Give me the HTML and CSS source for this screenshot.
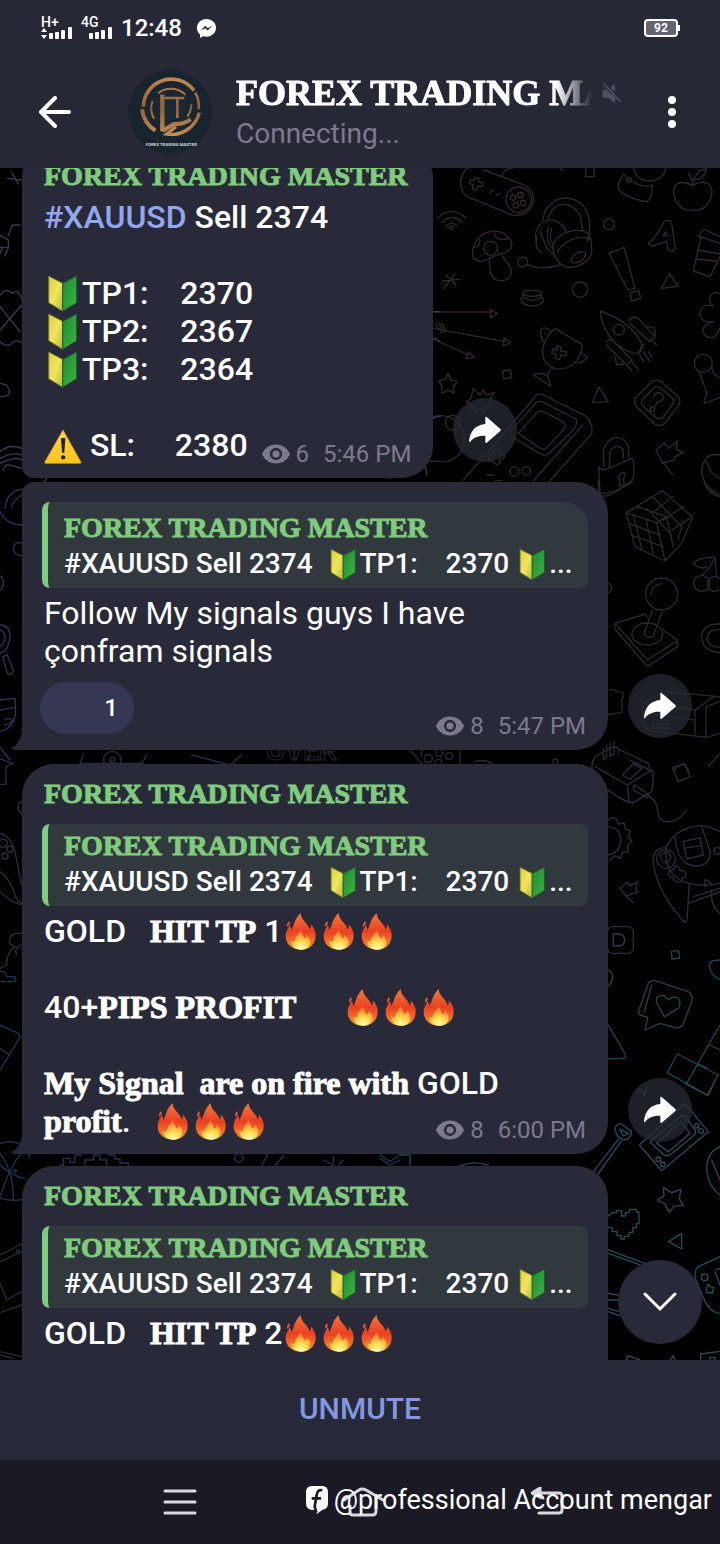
FILE: index.html
```html
<!DOCTYPE html>
<html lang="en">
<head>
    <meta charset="UTF-8">
    <meta name="viewport" content="width=device-width, initial-scale=1.0">
    <title>Forex Trading Master</title>
    <link rel="stylesheet" href="styles.css">
</head>
<body>
    <!-- shared icons -->
    <svg class="defs" width="0" height="0" aria-hidden="true">
        <defs>
            <linearGradient id="leaf-y" x1="0" y1="0" x2="1" y2="1"><stop offset="0" stop-color="#d9cf3a"/><stop offset=".5" stop-color="#f1e65c"/><stop offset="1" stop-color="#b5b93a"/></linearGradient>
            <linearGradient id="leaf-g" x1="0" y1="0" x2="1" y2="1"><stop offset="0" stop-color="#1f8a35"/><stop offset="1" stop-color="#3db53f"/></linearGradient>
            <linearGradient id="flame" x1="0" y1="0" x2="0" y2="1"><stop offset="0" stop-color="#f4793c"/><stop offset=".5" stop-color="#ea4022"/><stop offset="1" stop-color="#f7922c"/></linearGradient>
            <radialGradient id="flame-core" cx=".5" cy=".95" r=".9"><stop offset="0" stop-color="#fffbc0"/><stop offset=".4" stop-color="#ffdf4f"/><stop offset="1" stop-color="#f6702a"/></radialGradient>
            <linearGradient id="warn" x1="0" y1="0" x2="0" y2="1"><stop offset="0" stop-color="#fbd34a"/><stop offset="1" stop-color="#fcc419"/></linearGradient>
        </defs>
        <symbol id="beginner" viewBox="0 0 114 114">
            <path d="M14 6 L56 28 L56 112 L14 86Z" fill="url(#leaf-y)" stroke="#6a7420" stroke-width="3"/>
            <path d="M98 6 L56 28 L56 112 L98 86Z" fill="url(#leaf-g)" stroke="#1d5a2a" stroke-width="3"/>
        </symbol>
        <symbol id="fire" viewBox="0 0 114 114">
            <path d="M57 113 C28 113 10 95 11 70 C12 55 20 48 23 39 C27 45 27 50 27 54 C38 42 35 22 56 3 C56 24 79 34 83 52 C87 48 88 43 86 37 C97 49 102 60 101 73 C100 96 84 113 57 113Z" fill="url(#flame)"/>
            <path d="M21 28 C27 34 21 40 16 45 C13 39 16 33 21 28Z" fill="#e8522d"/>
            <path d="M57 113 C38 113 26 101 28 83 C32 89 35 90 38 88 C38 74 52 66 55 54 C63 64 62 71 68 79 C72 78 74 74 74 69 C83 77 88 85 85 95 C81 108 70 113 57 113Z" fill="url(#flame-core)"/>
        </symbol>
        <symbol id="warning" viewBox="0 0 114 114">
            <path d="M57 12 L111 109 Q112 112 108 112 L5 112 Q1 112 2 109Z" fill="url(#warn)" stroke="#e0a41a" stroke-width="2"/>
            <path d="M51 36h13l-3 44h-7Z" fill="#222"/>
            <circle cx="57.500" cy="94" r="6.500" fill="#222"/>
        </symbol>
        <symbol id="eye" viewBox="0 0 86 58">
            <path fill-rule="evenodd" d="M43 0C22 0 7 12 0 29c7 17 22 29 43 29s36-12 43-29C79 12 64 0 43 0Zm0 48a19 19 0 1 1 0-38 19 19 0 0 1 0 38Z" fill="currentColor"/>
            <circle cx="43" cy="29" r="11" fill="currentColor"/>
        </symbol>
        <symbol id="share" viewBox="0 0 96 82">
            <path d="M49 2 Q50 0 53 2 L94 38 Q97 41 94 44 L53 79 Q50 81 49 78 V58 C27 57 12 64 3 77 Q0 79 0 75 C3 43 20 26 49 23Z" fill="#fff"/>
        </symbol>
    </svg>

    <header class="top">
        <div class="status">
            <span class="signal"><span class="net">H+</span>
                <svg width="32" height="12" viewBox="0 0 32 12" fill="#fff"><path d="M0 5l3-4 3 4zM0 8l3 4 3-4z"/><rect x="8" y="6" width="4" height="6" rx="1"/><rect x="14" y="5" width="4" height="7" rx="1"/><rect x="20" y="3" width="4" height="9" rx="1"/><rect x="27" y="0" width="4" height="12" rx="1"/></svg>
            </span>
            <span class="signal"><span class="net">4G</span>
                <svg width="32" height="12" viewBox="0 0 32 12" fill="#fff"><rect x="8" y="6" width="4" height="6" rx="1"/><rect x="14" y="5" width="4" height="7" rx="1"/><rect x="20" y="3" width="4" height="9" rx="1"/><rect x="27" y="0" width="4" height="12" rx="1"/></svg>
            </span>
            <time class="clock">12:48</time>
            <svg class="messenger" width="19" height="19" viewBox="0 0 56 56"><path d="M28 0C12 0 0 11 0 26c0 8 3 15 9 20v10l9-5c3 1 6 1 10 1 16 0 28-11 28-26S44 0 28 0Z" fill="#fff"/><path d="M11 34l13-14 8 7 13-7-13 14-8-7Z" fill="#272836"/></svg>
            <span class="battery">92</span>
        </div>

        <div class="bar">
            <button class="icon-btn" aria-label="Back">
                <svg width="34" height="32" viewBox="0 0 34 32" fill="none" stroke="#fff" stroke-width="4" stroke-linecap="round" stroke-linejoin="round"><path d="M17 2L3 16l14 14M3 16h28"/></svg>
            </button>
            <svg class="avatar" viewBox="384 212 252 252" role="img" aria-label="Channel photo">
                <defs>
                    <radialGradient id="av"><stop offset="0" stop-color="#1b2a33"/><stop offset="1" stop-color="#17232d"/></radialGradient>
                    <linearGradient id="gold" gradientUnits="userSpaceOnUse" x1="0" y1="236" x2="0" y2="410"><stop offset="0" stop-color="#bd8852"/><stop offset=".5" stop-color="#916038"/><stop offset="1" stop-color="#c58f55"/></linearGradient>
                </defs>
                <circle cx="510" cy="338" r="126" fill="url(#av)"/>
                <g fill="none" stroke="url(#gold)">
                    <path d="M430 322 A84 84 0 0 1 582 274" stroke-width="11"/>
                    <path d="M586 280 A84 84 0 0 1 596 330" stroke-width="8"/>
                    <path d="M598 340 A86 86 0 0 1 500 404 L528 382" stroke-width="10"/>
                    <path d="M426 330 A88 88 0 0 0 466 394" stroke-width="12"/>
                    <path d="M462 358 A62 62 0 0 1 458 305 M474 282 A62 62 0 0 1 556 286" stroke-width="6"/>
                    <path d="M574 315 A64 64 0 0 1 562 352" stroke-width="6"/>
                    <path d="M487 286 V396" stroke-width="13"/>
                    <path d="M487 394 L522 374 Q550 376 572 360" stroke-width="12"/>
                    <path d="M493 296 H553 M532 296 V356" stroke-width="8"/>
                </g>
                <text x="437" y="440" class="avatar-text">FOREX TRADING MASTER</text>
            </svg>
            <div class="title">
                <div class="title-row">
                    <h1>FOREX TRADING MASTER</h1>
                    <svg width="20" height="22" viewBox="0 0 58 64" fill="#4f5060"><path d="M38 4v24L24 17ZM2 22h10l26 24v16L18 46H2Z"/><path d="M4 4l50 54" stroke="#4f5060" stroke-width="5"/></svg>
                </div>
                <p>Connecting...</p>
            </div>
            <button class="icon-btn" aria-label="More options">
                <svg width="8" height="32" viewBox="0 0 8 32" fill="#fff"><circle cx="4" cy="4" r="4"/><circle cx="4" cy="16" r="4"/><circle cx="4" cy="28" r="4"/></svg>
            </button>
        </div>
    </header>

    <main class="chat">
        <!-- wallpaper -->
        <svg class="wallpaper" viewBox="0 168 720 1192" preserveAspectRatio="xMidYMin slice" aria-hidden="true">
            <g transform="translate(420 165) scale(.33333)" stroke="#30262e">
                <path d="M145 8C110 30 115 95 160 102L270 148C310 160 345 130 340 95C335 70 320 60 300 55L190 15M245 35Q250 10 285 8H420l8 8M497 8v27h25V10"/>
                <circle cx="296" cy="104" r="38"/><circle cx="279" cy="98" r="8"/><circle cx="301" cy="90" r="8"/><circle cx="287" cy="121" r="8"/><circle cx="309" cy="114" r="8"/>
                <path d="M163 37l14 4-2 10 14 2-3 12-12-2-5 12-12-4 3-11-12-4 4-12 11 3zM208 84l12-8M228 93l12-8"/>
                <path d="M52 160Q95 118 138 160M65 173Q95 142 128 173M78 184Q95 165 112 184"/><circle cx="94" cy="188" r="5"/>
                <path d="M160 280C145 230 200 180 250 205C285 230 285 255 245 265C215 275 190 290 180 290ZM222 203Q225 228 262 222M162 247Q180 245 180 225M208 285C210 310 208 345 240 347C270 348 280 325 270 305L245 270"/><circle cx="212" cy="250" r="21"/>
                <path d="M368 165C380 90 460 80 495 130C515 165 510 195 502 230M384 170C390 110 450 100 480 150L488 195M350 230C335 190 375 150 410 170Q440 185 436 200M365 262Q342 250 350 215M362 200Q380 265 405 270M385 185Q375 240 402 250M395 190Q385 225 400 235M398 245C410 200 470 185 505 205M398 245C400 280 420 300 440 307C475 310 520 285 515 250Q515 225 505 205M412 262C430 225 475 210 508 222M322 298Q360 318 418 300"/>
                <ellipse cx="475" cy="277" rx="24" ry="13" transform="rotate(-32 475 277)"/><circle cx="308" cy="291" r="15"/><circle cx="567" cy="178" r="16"/><circle cx="480" cy="374" r="23"/>
                <path d="M610 28C590 60 590 75 610 85Q640 105 680 110Q695 105 697 60M612 28Q650 70 697 62M640 8Q650 50 695 48Q735 40 738 8"/><circle cx="627" cy="45" r="7"/>
                <path d="M815 62C780 40 755 60 762 90C770 130 800 140 822 135C850 140 875 110 876 80C875 48 845 45 815 62ZM818 62Q818 40 805 25M820 45Q835 10 860 12Q850 45 820 45"/>
                <path d="M685 235Q715 210 732 170Q750 160 755 175L766 250Q755 265 745 255L740 230L715 237Q695 250 685 235M730 213l5-12 6 10z"/>
                <path d="M568 265L612 247L645 370L623 375ZM630 383l26-6 6 23-27 8zM748 325l26 38-50 8zM900 215L850 192L836 213L900 235M843 218L820 318L870 336L900 275M833 255l67 12M828 282l62 6"/>
                <path d="M67 348l50-5M78 330l30 30M105 328l-35 43M40 441H215M212 433v26l20-13zM40 490L255 530M252 520l20 12-22 10zM45 475l20 28M55 473l18 28M66 475l14 25M40 522L145 570M146 560l16 17-24 4z"/>
                <ellipse cx="337" cy="385" rx="28" ry="9"/><path d="M309 385v12q28 18 56 0v-12M303 398q0 24 34 25q34-2 34-24"/>
                <path d="M405 490L488 540C480 590 450 615 410 612C360 600 350 540 405 490ZM395 500Q370 480 362 495Q362 530 375 530M480 562L503 576Q485 600 465 592M392 612L382 632L392 663L340 630Q360 620 382 632M410 543l14 3-2 12 18 2-3 12-14-2-5 14-13-4 4-12-14-4 4-12 14 3z"/>
                <path d="M541 438C590 455 650 490 665 540Q660 570 635 563C590 550 545 500 541 438ZM628 465Q640 450 655 460L705 515L690 530L630 475M560 530Q570 520 582 530L635 585L620 600L560 540M677 485l25 3 5 25M585 575l5 25 20-3M655 570l18-33M700 530l10 10M670 560l20 30M660 570l10 20M685 560l10 15M635 590l20 25M620 600l15 18"/><circle cx="597" cy="494" r="16"/>
                <path d="M84 625l9 20 18 4-10 16 1 19-17-8-19 8-1-20-9-17 20-4ZM248 618l23-4 4 24-24 4zM537 666l28 44-48 2zM160 670l20 20 10-15 8 15 25-8-15 22 10 12-20 5-3 20-15-10-10 15-5-20-15 5 3-15-15-5 15-12z"/>
                <path d="M645 700L695 650Q710 640 725 652L775 695Q785 710 775 722L735 775Q720 785 705 778L650 725Q640 712 645 700ZM665 705L703 668Q712 662 722 670L758 700Q764 710 758 718L728 758Q718 765 708 758L668 722Q662 714 665 705M700 697Q705 680 722 684Q735 690 728 704Q722 712 710 712L706 725"/><circle cx="697" cy="733" r="7"/>
                <path d="M130 945L350 690Q360 685 370 690L500 755Q520 780 515 805L390 948M270 800L350 712Q360 706 370 712L468 762Q475 775 460 795L385 868Q370 875 358 865L268 810M295 805L352 742Q360 735 370 740L432 772Q440 785 432 792L378 850Q368 855 358 848ZM488 780L340 948"/>
                <circle cx="283" cy="920" r="14"/><circle cx="319" cy="918" r="13"/><path d="M230 850q12 5 10 15q15-5 15 8q-5 12-15 10q0 18-12 15q-10-5-10-12q-15 5-12-10q5-8 15-8q-3-15 9-18M200 930h20M225 947h20M40 755Q100 740 130 800Q145 870 80 890L30 888"/><circle cx="98" cy="773" r="22"/>
                <path d="M552 905L550 855C560 810 615 805 625 845L627 880M568 905L570 860Q590 830 610 855L610 880M536 905Q545 920 560 912L637 880Q645 890 640 940Q600 985 540 985ZM598 930q15-15 17 0l-5 12 3 17-15 3 2-20q-7-3-2-12M708 855L733 833L745 850L772 828L768 853L790 862L765 875L762 885L728 895ZM728 890L758 930"/>
                <circle cx="850" cy="595" r="27"/><path d="M838 620L862 690Q855 690 852 715L900 698M875 605L880 625L900 640M900 385C870 375 860 405 880 425C850 410 830 440 845 460C855 475 870 470 880 470C840 480 840 510 870 518C890 520 900 490 900 490M900 870Q850 860 845 920Q850 970 900 990M860 890Q870 930 900 940"/>
            </g>
            <g transform="translate(400 480) scale(.33333)" stroke="#2b2730">
                <path d="M728 68L788 32L878 112L845 190L795 243L705 200L678 98L710 80ZM678 98L770 128L800 110L710 80M770 128L795 243M800 110L820 200M700 106L725 205M738 118L760 220M685 130L780 165M695 165L788 200M758 50L845 140L835 175M740 85L815 165M762 95L818 50M790 120L850 80M815 150L870 115"/>
                <circle cx="785" cy="342" r="48"/><path d="M752 345Q755 315 785 310M757 390L732 460Q745 480 760 468L787 395M645 430L735 402L742 412M645 430V447L742 560L832 500V480L790 450M645 430L742 540L832 482"/><ellipse cx="742" cy="462" rx="46" ry="33"/>
                <circle cx="905" cy="310" r="24"/><circle cx="945" cy="312" r="22"/><path d="M900 290Q930 270 945 232L950 290M945 232Q900 230 880 250Q900 270 920 260M960 432Q905 430 905 475Q910 515 960 518M960 448Q920 448 922 480Q928 502 960 502M625 310q12 3 10 15-3 12-10 12M630 630q15-5 20 5 15 0 20 5 0 15-5 22 5 15 0 22 5 12-5 15-20 0-28 5-10 0-8-5M912 0Q920 40 960 50M595 0V48Q610 50 630 45L698 5"/>
                <path d="M728 670L790 635L960 650M728 670V720L745 752L920 772L960 760M728 670L885 690V765M885 690L940 650M918 680L960 665M918 680V772M750 700L880 720"/><rect x="758" y="730" width="20" height="14"/><rect x="786" y="732" width="20" height="14"/>
                <path d="M575 855L585 830L640 800L745 850L750 870M610 805V840l10-10V795M630 790V830l12-8V785M640 800q20-2 15 20M820 870l30-20 15 20M925 860l35-40M30 810L70 855M65 830Q60 812 70 808M180 812V850M225 845q30-10 55 8M460 850v-12h12v12"/><circle cx="85" cy="835" r="12"/><circle cx="118" cy="818" r="11"/><circle cx="148" cy="828" r="10"/><circle cx="115" cy="848" r="10"/>
            </g>
            <g transform="translate(580 760) scale(.33333)" stroke="#2b2c3c">
                <path d="M40 0C30 25 35 50 90 95Q140 130 160 128L215 95Q222 70 218 35L150 0M45 20L142 75L215 30M142 75L148 128M128 45L160 10L185 25L150 58ZM165 75l42 30-5 8-38-20q-8-12 1-18M207 108C250 140 220 160 245 180C270 195 305 175 320 150M277 22l38-10 15 38-35 15z"/>
                <path d="M85 180q12-12 25-2l5 14 18-3 2 18 16 6-5 18 10 14-14 12 3 18-18 2-5 18-18-8-15 14M85 200Q125 205 122 245Q118 280 85 285M120 385l22-18 8 10 22-10-5 18 5 12-20 5-12 8zM140 410l20 18"/>
                <path d="M420 215C360 180 290 200 258 262Q215 265 220 310C230 380 270 440 315 488Q325 480 322 465L328 370M258 262Q250 330 300 360Q350 385 420 370M285 230C290 290 310 315 345 318Q385 320 392 280L365 200M310 245l50-12 10 52-50 12ZM312 265l50-8M325 430L420 395M340 410L420 385M395 390Q390 440 420 460M375 358v22l20-8z"/><circle cx="258" cy="297" r="28"/><circle cx="257" cy="292" r="15"/><path d="M285 320q15-5 15 12 18-3 18 10 0 12-12 12-2 15-15 12-12-2-10-14-15 0-15-12 2-12 14-10z"/><circle cx="412" cy="273" r="10"/>
                <rect x="82" y="500" width="78" height="80" rx="16"/>
            </g>
            <g transform="translate(580 760) scale(.33333)" stroke="#234250">
                <path d="M100 522h20q14 5 14 18t-14 18h-20zM274 574l22-2 3 22-23 3zM85 630q15 8 12 25-3 15-12 22M420 600Q385 600 388 620Q395 650 420 658M175 755L205 670Q210 660 225 662L325 695Q340 705 335 725L308 795Q300 806 285 803L240 790L195 810L203 772L180 765ZM193 755L215 675M253 770L230 728Q225 705 248 706Q260 710 265 720Q280 705 295 715Q305 730 295 745ZM85 795L137 885Q138 895 125 896H85M262 938L292 882L415 945L382 1005ZM320 970L420 795M390 855L420 870M355 912L382 925M175 985l20 20M200 982l-10 30M168 998l32-5"/>
            </g>
            <g transform="translate(400 1080) scale(.33333)" stroke="#234c5c">
                <path d="M645 145Q650 130 665 132L695 155Q690 185 665 178Q648 170 645 145ZM660 148l25 12-15 8zM655 178L580 275M665 182L592 285M718 195L855 70L925 155L785 272ZM750 185L840 110Q850 105 858 112L885 150Q890 160 880 168L810 225Q800 230 792 225ZM770 190L842 125L870 160L805 215Z"/><circle cx="890" cy="137" r="7"/><circle cx="903" cy="153" r="7"/><circle cx="775" cy="238" r="7"/><circle cx="788" cy="253" r="7"/>
                <path d="M790 323l25 15 28-10-5 28 12 20-28 3-15 18-12-25-23-12 20-12ZM625 408l12-10h12v-6h16v16h12v-10h12v-10h20v8h8v35h-8v12h-10v14h-12v12h-14v8h-10v-10h-12v-12h-14v-12h-12M845 460v47l-40-22zM625 510L735 550M625 520L720 555M625 640L655 645M625 660h30M625 695l35 12M625 685l40 12M960 530L895 560Q880 575 888 600L915 665Q935 700 960 700M948 570l12-5M945 575l15 40M960 200Q920 215 920 270Q925 320 960 345M935 240l25 60M855 10L920 45Q925 48 928 40L945 0M678 842l5-15 35 12-2 8M810 842l10-15 5 15M902 842v-20l58-8M930 842v-10h15v10M180 258Q220 240 265 256M0 225h30v30"/><circle cx="914" cy="592" r="10"/><path d="M925 612l5 8 12 3-5 8 2 8-10-2-8 2-2-10z"/>
            </g>
            <g transform="translate(0 165) scale(.33333)" stroke="#3d3754">
                <path d="M22 40l45 5M35 22l20 35M60 180H37L25 212M0 212l25 12v24H0M8 245l-8 22M25 248l-10 25M0 390Q20 365 35 385Q55 370 65 400M65 420L0 495M0 425l60 75M0 530q25 20 35 5q10-15 30-2M0 655l20 5 10 20q0 15-30 15M0 860Q30 835 65 850M0 880Q40 860 65 870M0 895q40-20 65-12M10 915q5-20 20-15l35 10M1300 440h20M1300 520q10 0 20 10M1300 760q10-8 20-5M130 960l12-25M1170 940q10-20 30-5M1240 900q40-10 40 30"/>
            </g>
            <g transform="translate(0 470) scale(.33333)" stroke="#332e55">
                <path d="M65 58Q20 65 15 115M65 75Q40 90 35 110M0 125Q20 165 65 165M65 218Q40 215 40 237Q42 255 65 257M0 318q12 5 10 25-2 15-10 18M0 465Q30 465 30 500Q25 545 0 550M0 480Q15 485 15 505Q10 525 0 530M8 560L22 555L40 600Q35 620 22 610ZM0 690L45 685L47 730Q40 775 0 785M0 720L45 712M15 750q15-8 20 0t-20 15M0 832L30 870"/>
            </g>
            <g transform="translate(0 755) scale(.33333)" stroke="#292c43">
                <path d="M0 12L38 25L18 35V88H0M250 0L240 25H425L440 0M575 0L690 30L725 0M65 140Q50 145 55 165L65 178M0 235Q30 240 45 290L65 390M0 350Q30 370 45 420Q52 440 65 445M0 410Q35 445 62 448M65 535Q30 530 28 560Q30 570 45 575Q20 590 20 630L0 640M65 570Q40 580 50 600"/>
                <circle cx="337" cy="15" r="26"/><circle cx="337" cy="15" r="7"/><circle cx="10" cy="265" r="12"/><circle cx="30" cy="282" r="9"/><circle cx="15" cy="303" r="9"/>
            </g>
            <text x="266" y="760" class="over">OVER</text>
            <g transform="translate(0 970) scale(.33333)" stroke="#1e3450">
                <path d="M0 5q15-5 20 15h25q5 5 0 15H0M0 165L55 190Q60 195 58 205L0 300M0 235L28 255M0 520Q60 500 90 560M0 550Q40 600 40 690M65 548Q30 590 0 680M0 585Q40 620 75 625M0 685Q40 695 65 688M180 585h10v-20h20v12h15v-22h20M255 585v-15h25v-15h20v15h20v15M325 555h20v12h15v12h25v8M785 588l18-35M825 588l25-32M970 570l30 15M1000 560v20M1030 570l-15 15M1140 555l30 20 30-20M1140 565l30 20 30-15"/><circle cx="45" cy="602" r="4"/><circle cx="717" cy="564" r="13"/>
            </g>
            <g transform="translate(0 1210) scale(.33333)" stroke="#1c3039">
                <path d="M0 135L65 102M0 155L65 125M0 220L20 270L65 245M0 308L65 285M0 425L65 440M0 435l40 10"/><circle cx="54" cy="124" r="4"/>
            </g>
        </svg>

        <div class="messages">
            <div class="row joined">
                <article class="bubble narrow">
                    <h2 class="sender">FOREX TRADING MASTER</h2>
                    <div class="text strong">
                        <p><a href="#xauusd">#XAUUSD</a> Sell 2374</p>
                        <p>&nbsp;</p>
                        <p><svg class="emoji" role="img" aria-label="beginner"><use href="#beginner"/></svg>TP1:    2370</p>
                        <p><svg class="emoji" role="img" aria-label="beginner"><use href="#beginner"/></svg>TP2:    2367</p>
                        <p><svg class="emoji" role="img" aria-label="beginner"><use href="#beginner"/></svg>TP3:    2364</p>
                        <p>&nbsp;</p>
                    </div>
                    <div class="last">
                        <p class="text strong"><svg class="emoji" role="img" aria-label="warning"><use href="#warning"/></svg> SL:     2380</p>
                        <div class="meta"><svg><use href="#eye"/></svg><span>6</span><time>5:46 PM</time></div>
                    </div>
                </article>
                <button class="share" aria-label="Share"><svg><use href="#share"/></svg></button>
            </div>

            <div class="row spaced">
                <article class="bubble tail reply-only">
                    <blockquote class="quote">
                        <h3>FOREX TRADING MASTER</h3>
                        <p>#XAUUSD Sell 2374  <svg class="emoji" role="img" aria-label="beginner"><use href="#beginner"/></svg>TP1:    2370 <svg class="emoji" role="img" aria-label="beginner"><use href="#beginner"/></svg>...</p>
                    </blockquote>
                    <p class="text">Follow My signals guys I have çonfram signals</p>
                    <div class="last">
                        <button class="reaction" aria-label="1 reaction">1</button>
                        <div class="meta"><svg><use href="#eye"/></svg><span>8</span><time>5:47 PM</time></div>
                    </div>
                    <svg class="tail-shape" viewBox="0 0 12 30"><path d="M12 0Q12 24 0 28Q1 30 4 30H12Z"/></svg>
                </article>
                <button class="share" aria-label="Share"><svg><use href="#share"/></svg></button>
            </div>

            <div class="row">
                <article class="bubble tail">
                    <h2 class="sender">FOREX TRADING MASTER</h2>
                    <blockquote class="quote">
                        <h3>FOREX TRADING MASTER</h3>
                        <p>#XAUUSD Sell 2374  <svg class="emoji" role="img" aria-label="beginner"><use href="#beginner"/></svg>TP1:    2370 <svg class="emoji" role="img" aria-label="beginner"><use href="#beginner"/></svg>...</p>
                    </blockquote>
                    <div class="text strong">
                        <p>GOLD   <b>HIT TP</b> 1<svg class="emoji" role="img" aria-label="fire"><use href="#fire"/></svg><svg class="emoji" role="img" aria-label="fire"><use href="#fire"/></svg><svg class="emoji" role="img" aria-label="fire"><use href="#fire"/></svg></p>
                        <p>&nbsp;</p>
                        <p>40+<b>PIPS PROFIT</b>      <svg class="emoji" role="img" aria-label="fire"><use href="#fire"/></svg><svg class="emoji" role="img" aria-label="fire"><use href="#fire"/></svg><svg class="emoji" role="img" aria-label="fire"><use href="#fire"/></svg></p>
                        <p>&nbsp;</p>
                        <p><b>My Signal</b>  <b>are on fire with</b> GOLD</p>
                    </div>
                    <div class="last">
                        <p class="text strong"><b>profit</b>.   <svg class="emoji" role="img" aria-label="fire"><use href="#fire"/></svg><svg class="emoji" role="img" aria-label="fire"><use href="#fire"/></svg><svg class="emoji" role="img" aria-label="fire"><use href="#fire"/></svg></p>
                        <div class="meta"><svg><use href="#eye"/></svg><span>8</span><time>6:00 PM</time></div>
                    </div>
                    <svg class="tail-shape" viewBox="0 0 12 30"><path d="M12 0Q12 24 0 28Q1 30 4 30H12Z"/></svg>
                </article>
                <button class="share" aria-label="Share"><svg><use href="#share"/></svg></button>
            </div>

            <div class="row no-share">
                <article class="bubble">
                    <h2 class="sender">FOREX TRADING MASTER</h2>
                    <blockquote class="quote">
                        <h3>FOREX TRADING MASTER</h3>
                        <p>#XAUUSD Sell 2374  <svg class="emoji" role="img" aria-label="beginner"><use href="#beginner"/></svg>TP1:    2370 <svg class="emoji" role="img" aria-label="beginner"><use href="#beginner"/></svg>...</p>
                    </blockquote>
                    <div class="text strong">
                        <p>GOLD   <b>HIT TP</b> 2<svg class="emoji" role="img" aria-label="fire"><use href="#fire"/></svg><svg class="emoji" role="img" aria-label="fire"><use href="#fire"/></svg><svg class="emoji" role="img" aria-label="fire"><use href="#fire"/></svg></p>
                        <p>&nbsp;</p>
                    </div>
                </article>
            </div>
        </div>

        <button class="scroll-down" aria-label="Scroll to bottom">
            <svg width="36" height="22" viewBox="0 0 36 22" fill="none" stroke="#fff" stroke-width="3" stroke-linecap="round" stroke-linejoin="round"><path d="M3 3l15 15L33 3"/></svg>
        </button>
    </main>

    <button class="unmute">UNMUTE</button>

    <nav class="nav">
        <button aria-label="Recent apps"><svg width="34" height="28" viewBox="0 0 34 28"><path d="M2 3h30M2 14h30M2 25h30"/></svg></button>
        <button aria-label="Home"><svg width="46" height="32" viewBox="0 0 46 32"><path d="M3 14L18 4Q21 2 25 4L42 14M9 20V26Q9 29 12 29H31Q35 29 35 25V10"/></svg></button>
        <button aria-label="Back"><svg width="34" height="30" viewBox="0 0 34 30"><path d="M8 6H28Q31 6 31 9V23Q31 26 28 26H8"/><path d="M1 6L9 1V10Z" class="solid"/></svg></button>
        <div class="watermark">
            <svg width="22" height="28" viewBox="0 0 66 84"><path d="M18 0H48Q66 0 66 18V52Q66 70 50 71L32 84L31 72H18Q0 70 0 52V18Q0 0 18 0Z" fill="#fff"/><path d="M49 13Q34 9 32 28L26 62L31 80M17 37H45" fill="none" stroke="#1b1a24" stroke-width="8"/></svg>
            <span>@professional Account mengar</span>
        </div>
    </nav>
</body>
</html>
```
FILE: styles.css
```css
* {
    box-sizing: border-box;
}
body {
    font-family: Roboto, "Liberation Sans", sans-serif;
    margin: 0;
    height: 100vh;
    display: flex;
    flex-direction: column;
    background: #000;
    color: #fff;
}
h1, h2, h3, p, blockquote {
    margin: 0;
}
button {
    font-family: inherit;
    color: inherit;
    background: none;
    border: none;
    padding: 0;
    cursor: pointer;
}
svg {
    display: block;
    flex: none;
}
.defs {
    position: absolute;
}

/* top bars */
.top {
    background: #272836;
}
.status {
    display: flex;
    align-items: center;
    height: 56px;
    padding: 0 42px 0 41px;
}
.signal {
    width: 40px;
}
.net {
    display: block;
    font-size: 14px;
    line-height: 10px;
    font-weight: 500;
}
.clock {
    font-size: 24px;
    font-weight: 500;
    width: 76px;
}
.battery {
    position: relative;
    margin-left: auto;
    width: 34px;
    height: 18px;
    border: 2px solid #fff;
    border-radius: 4px;
    background: #63646f;
    font-size: 12px;
    line-height: 14px;
    font-weight: 700;
    text-align: center;
}
.battery::after {
    content: "";
    position: absolute;
    right: -4px;
    top: 4px;
    width: 2px;
    height: 6px;
    background: #fff;
}
.bar {
    display: flex;
    align-items: center;
    height: 112px;
    padding: 0 44px 0 38px;
}
.icon-btn {
    flex: none;
}
.avatar {
    width: 84px;
    height: 84px;
    margin: 0 24px 0 56px;
}
.avatar-text {
    font-size: 13px;
    font-weight: 700;
    fill: #d5d8da;
}
.title {
    flex: 1;
    min-width: 0;
    margin-right: 46px;
}
.title-row {
    display: flex;
    align-items: center;
    gap: 10px;
}
.title h1 {
    flex: 1;
    min-width: 0;
    overflow: hidden;
    white-space: nowrap;
    font: bold 36px/44px "Liberation Serif", serif;
    -webkit-text-stroke: 1px currentColor;
    mask-image: linear-gradient(to right, #000 calc(100% - 36px), transparent);
}
.title p {
    font-size: 28px;
    line-height: 38px;
    color: #7c7b8c;
}

/* chat */
.chat {
    position: relative;
    flex: 1;
    min-height: 0;
    overflow: hidden;
}
.wallpaper {
    position: absolute;
    inset: 0;
    width: 100%;
    height: 100%;
    fill: none;
    stroke-width: 4;
    stroke-linejoin: round;
    stroke-linecap: round;
}
.over {
    font: bold 28px Roboto, sans-serif;
    stroke: #292730;
    stroke-width: 1;
}
.messages {
    position: relative;
    margin-top: -22px;
    padding: 0 28px 0 22px;
}
.row {
    display: flex;
    align-items: flex-end;
    gap: 20px;
    margin-bottom: 12px;
}
.joined {
    margin-bottom: 4px;
}
.spaced {
    margin-bottom: 14px;
}
.no-share {
    margin-right: 84px;
}
.bubble {
    position: relative;
    flex: 1;
    min-width: 0;
    padding: 14px 20px;
    background: #292a39;
    border-radius: 32px 32px 32px 12px;
}
.narrow {
    flex: none;
}
.tail {
    border-bottom-left-radius: 0;
}
.reply-only {
    padding-top: 20px;
    border-top-left-radius: 12px;
}
.tail-shape {
    position: absolute;
    left: -11px;
    bottom: 0;
    width: 12px;
    height: 30px;
    fill: #292a39;
}
.sender, .quote h3 {
    font: bold 28px/32px "Liberation Serif", serif;
    -webkit-text-stroke: 1px currentColor;
    color: #80cb7c;
    white-space: nowrap;
}
.sender {
    padding: 0 2px;
}
.quote {
    margin-top: 14px;
    padding: 4px 10px 6px 16px;
    border-left: 6px solid #80cb7c;
    border-radius: 8px;
    background: #31393f;
    overflow: hidden;
}
.quote h3 {
    line-height: 36px;
}
.quote p {
    font-size: 28px;
    line-height: 36px;
    font-weight: 500;
    white-space: pre;
}
.reply-only .quote {
    margin-top: 0;
    padding: 8px 10px 6px 16px;
    border-top-right-radius: 24px;
}
.text {
    margin-top: 6px;
    padding: 0 2px;
    font-size: 32px;
    line-height: 38px;
}
.text p {
    white-space: pre-wrap;
}
.strong {
    font-weight: 500;
}
.text b {
    font: bold 32px/1 "Liberation Serif", serif;
    -webkit-text-stroke: 1px currentColor;
}
.text a {
    color: #92a7ee;
    text-decoration: none;
}
.emoji {
    display: inline-block;
    vertical-align: top;
    width: 38px;
    height: 38px;
}
.quote .emoji {
    width: 33px;
    height: 36px;
}
.last {
    display: flex;
    align-items: flex-end;
    gap: 12px;
}
.last .text {
    margin: 0;
    white-space: pre;
}
.meta {
    display: flex;
    align-items: center;
    margin-left: auto;
    padding-right: 2px;
    font-size: 24px;
    line-height: 16px;
    color: #7b7b8b;
}
.meta svg {
    width: 28px;
    height: 20px;
    margin-right: 6px;
}
.meta time {
    margin-left: 14px;
}
.reaction {
    width: 94px;
    height: 52px;
    margin: 12px 0 2px -2px;
    padding-right: 16px;
    border-radius: 26px;
    background: #353753;
    font-size: 24px;
    font-weight: 500;
    text-align: right;
}
.share {
    display: flex;
    align-items: center;
    justify-content: center;
    flex: none;
    width: 64px;
    height: 64px;
    margin-bottom: 12px;
    border-radius: 50%;
    background: rgba(40, 43, 54, 0.75);
}
.share svg {
    width: 32px;
    height: 28px;
}
.joined .share {
    margin-bottom: 16px;
}
.scroll-down {
    position: absolute;
    right: 18px;
    bottom: 16px;
    display: flex;
    align-items: center;
    justify-content: center;
    width: 84px;
    height: 84px;
    border-radius: 50%;
    background: #292a39;
}

/* bottom bars */
.unmute {
    height: 100px;
    padding-bottom: 4px;
    background: #272939;
    color: #8299e2;
    font-size: 30px;
    font-weight: 500;
}
.nav {
    position: relative;
    display: grid;
    grid-template-columns: repeat(3, 1fr);
    height: 84px;
    padding: 0 80px 0 88px;
    background: #1b1a24;
}
.nav button {
    display: flex;
    align-items: center;
    justify-content: center;
    fill: none;
    stroke: #d9d9df;
    stroke-width: 3;
    stroke-linecap: round;
}
.nav .solid {
    fill: #d9d9df;
}
.watermark {
    position: absolute;
    right: 8px;
    top: 24px;
    display: flex;
    align-items: center;
    gap: 6px;
    font-size: 27px;
    line-height: 32px;
    white-space: nowrap;
    pointer-events: none;
}
```
